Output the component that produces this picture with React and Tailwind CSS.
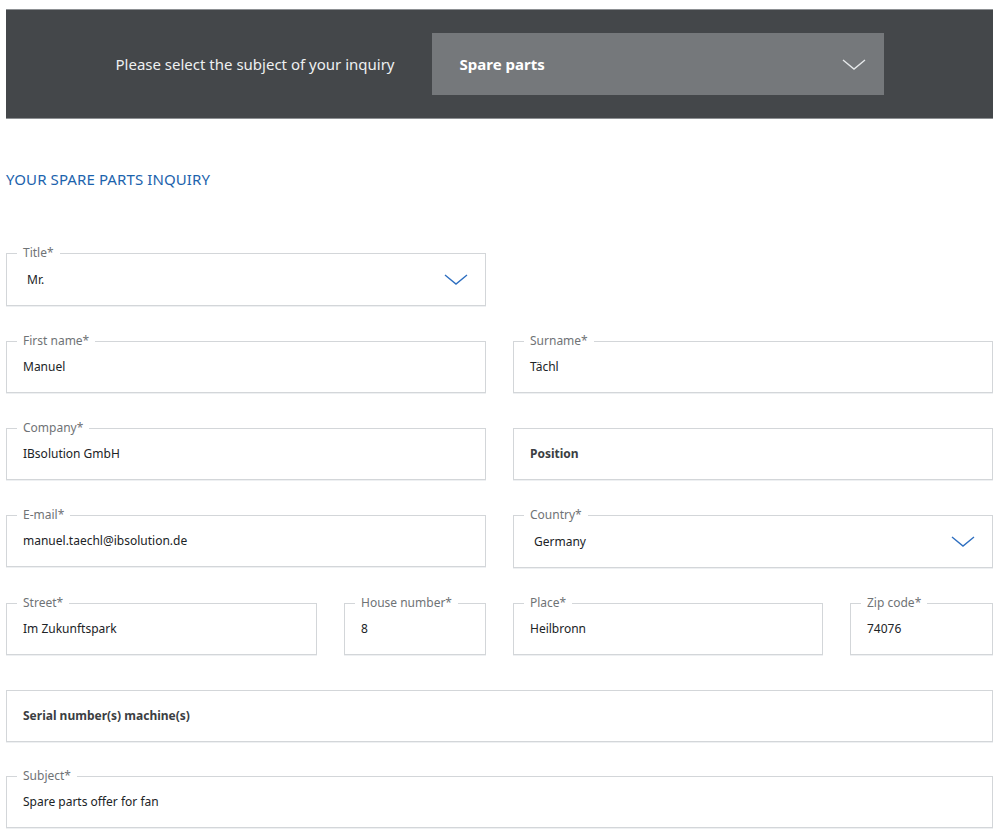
import React from 'react';

const font = { fontFamily: '"Noto Sans", "Open Sans", Arial, sans-serif' };

const Chevron = ({ className }) => (
    <svg viewBox="0 0 24 11" className={className} fill="none">
        <path d="M1 1 L12 10 L23 1" stroke="currentColor" strokeWidth="1.4" />
    </svg>
);

const Field = ({ label, value, placeholder, select, className = '' }) => (
    <div
        className={`relative border border-[#d3d6d9] shadow-[0_1px_0_#eef0f2] bg-white flex items-center ${
            select ? 'h-[53px] pl-[20px] pr-[17px]' : 'h-[52px] pl-[16px] pr-4'
        } ${className}`}
    >
        {label && (
            <span className="absolute -top-[10px] left-[10px] bg-white px-[6px] text-[12px] leading-[18px] text-[#6f7376]">
                {label}
            </span>
        )}
        {placeholder ? (
            <span className="text-[12px] font-bold text-[#3b3e42]">{placeholder}</span>
        ) : (
            <span className="text-[12px] text-[#202326]">{value}</span>
        )}
        {select && <Chevron className="ml-auto w-[24px] h-[11px] text-[#2e6fc0]" />}
    </div>
);

export default function App() {
    return (
        <div className="min-h-screen bg-white pt-[9px]" style={font}>
            <div className="ml-[6px] w-[987px]">
                {/* SUBJECT BAR */}
                <div className="h-[110px] bg-[#44474a] border-y border-[#8d9093] flex items-center justify-center gap-[37px]">
                    <span className="text-[15px] text-[#eef0f1]">Please select the subject of your inquiry</span>
                    <div className="w-[452px] h-[62px] bg-[#75787b] flex items-center pl-[28px] pr-[18px]">
                        <span className="text-[15px] font-bold text-white">Spare parts</span>
                        <Chevron className="ml-auto w-[24px] h-[11px] text-[#e6e8ea]" />
                    </div>
                </div>

                <h2 className="mt-[50px] text-[15px] leading-[20px] text-[#1c63ad] tracking-[0.1px]">
                    YOUR SPARE PARTS INQUIRY
                </h2>

                {/* FORM */}
                <div className="mt-[64px] flex flex-col gap-[35px]">
                    <div className="grid grid-cols-2 gap-x-[27px]">
                        <Field label="Title*" value="Mr." select />
                    </div>
                    <div className="grid grid-cols-2 gap-x-[27px]">
                        <Field label="First name*" value="Manuel" />
                        <Field label="Surname*" value="Tächl" />
                    </div>
                    <div className="grid grid-cols-2 gap-x-[27px]">
                        <Field label="Company*" value="IBsolution GmbH" />
                        <Field placeholder="Position" />
                    </div>
                    <div className="grid grid-cols-2 gap-x-[27px] items-start">
                        <Field label="E-mail*" value="manuel.taechl@ibsolution.de" />
                        <Field label="Country*" value="Germany" select />
                    </div>
                    <div className="grid grid-cols-2 gap-x-[27px]">
                        <div className="grid grid-cols-[1fr_142px] gap-x-[27px]">
                            <Field label="Street*" value="Im Zukunftspark" />
                            <Field label="House number*" value="8" />
                        </div>
                        <div className="grid grid-cols-[1fr_143px] gap-x-[27px]">
                            <Field label="Place*" value="Heilbronn" />
                            <Field label="Zip code*" value="74076" />
                        </div>
                    </div>
                    <Field placeholder="Serial number(s) machine(s)" />
                    <Field label="Subject*" value="Spare parts offer for fan" className="-mt-px" />
                </div>
            </div>
        </div>
    );
}
